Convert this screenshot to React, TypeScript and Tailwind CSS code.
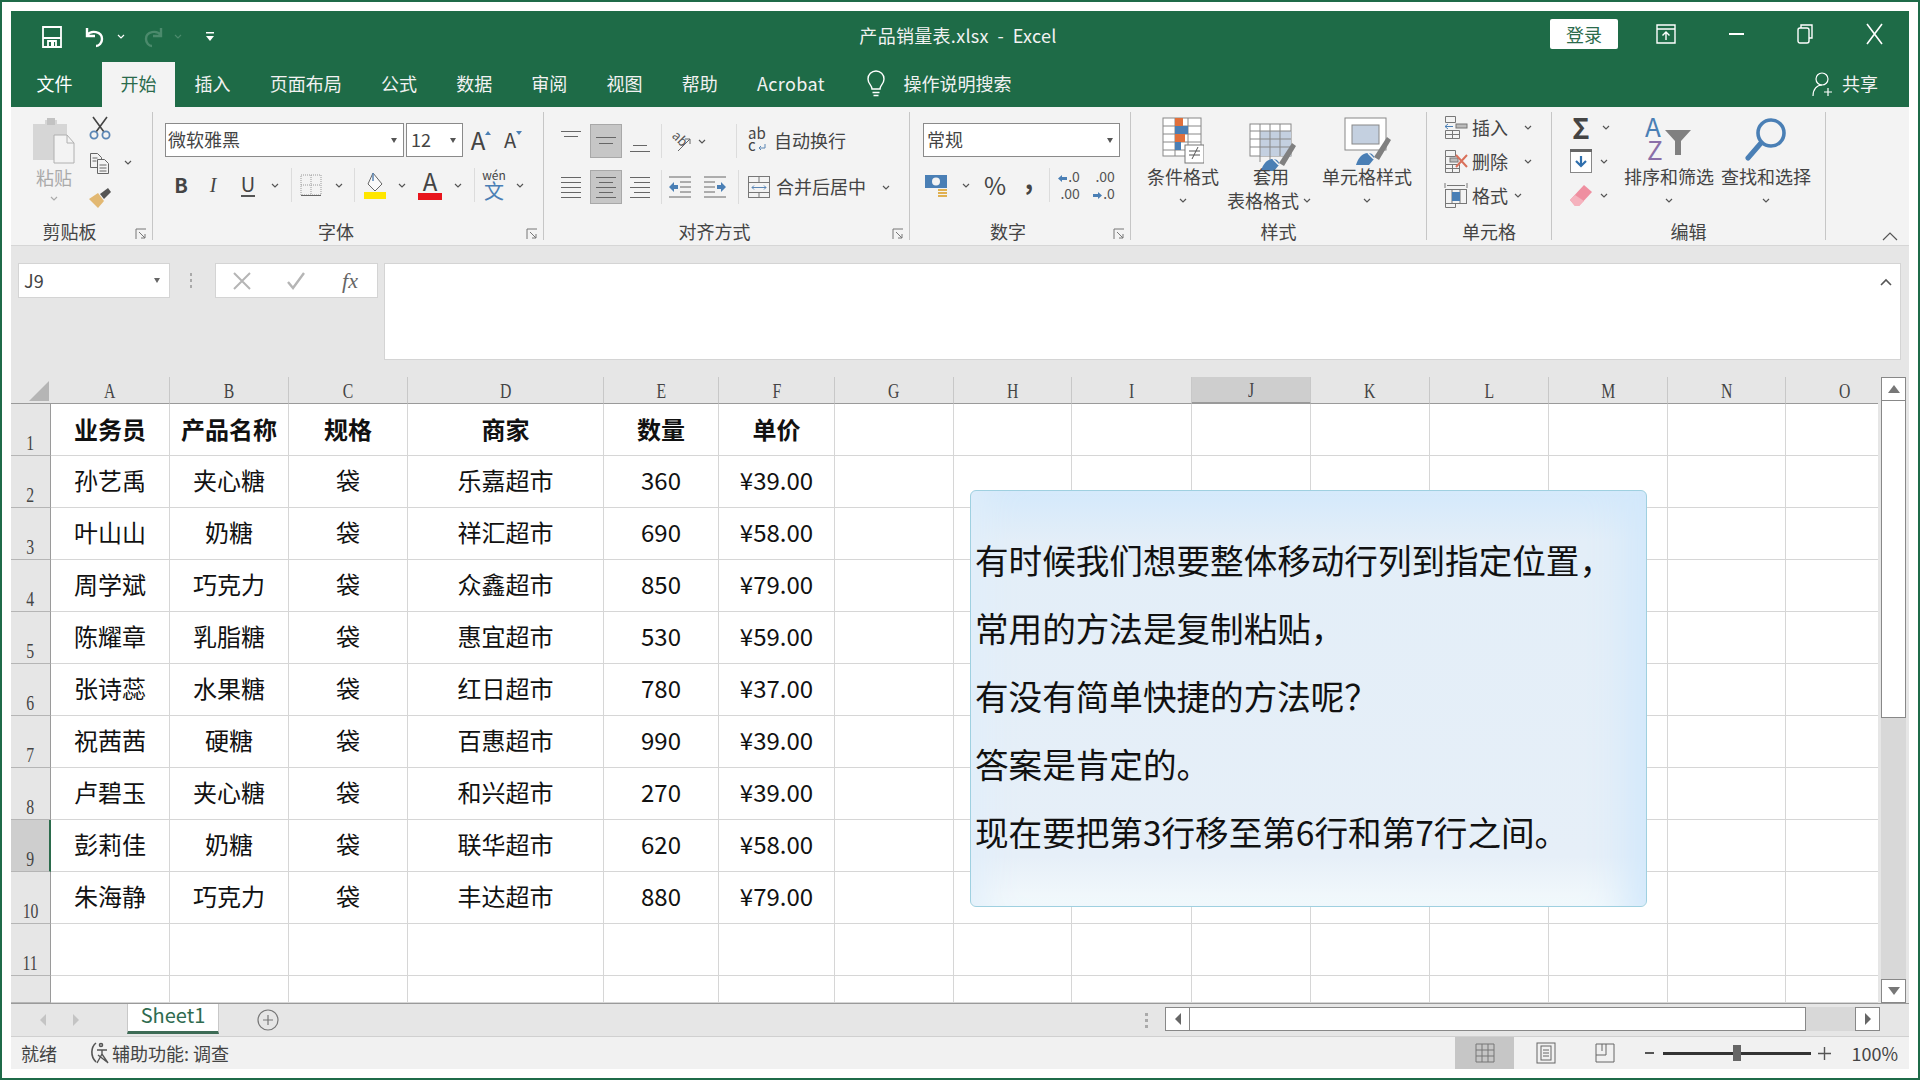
import type { ReactNode } from "react";
import clsx from "clsx";

const widths = ["A", "B", "C", "D", "E", "F", "G", "H", "I", "J", "K", "L", "M", "N", "O"];

const rows = [
  ["业务员", "产品名称", "规格", "商家", "数量", "单价"],
  ["孙艺禹", "夹心糖", "袋", "乐嘉超市", "360", "¥39.00"],
  ["叶山山", "奶糖", "袋", "祥汇超市", "690", "¥58.00"],
  ["周学斌", "巧克力", "袋", "众鑫超市", "850", "¥79.00"],
  ["陈耀章", "乳脂糖", "袋", "惠宜超市", "530", "¥59.00"],
  ["张诗蕊", "水果糖", "袋", "红日超市", "780", "¥37.00"],
  ["祝茜茜", "硬糖", "袋", "百惠超市", "990", "¥39.00"],
  ["卢碧玉", "夹心糖", "袋", "和兴超市", "270", "¥39.00"],
  ["彭莉佳", "奶糖", "袋", "联华超市", "620", "¥58.00"],
  ["朱海静", "巧克力", "袋", "丰达超市", "880", "¥79.00"],
];

const tabs = ["插入", "页面布局", "公式", "数据", "审阅", "视图", "帮助"];

const note = [
  "有时候我们想要整体移动行列到指定位置，",
  "常用的方法是复制粘贴，",
  "有没有简单快捷的方法呢？",
  "答案是肯定的。",
  "现在要把第3行移至第6行和第7行之间。",
];

function Slot({ className, children }: { className?: string; children?: ReactNode }) {
  return <div className={clsx("flex h-full shrink-0 items-center justify-center", className)}>{children}</div>;
}

function Chev({ className, color = "#555" }: { className?: string; color?: string }) {
  return (
    <Slot className={clsx("w-[16px]", className)}>
      <svg width="8" height="5" viewBox="0 0 8 5" fill="none" stroke={color} strokeWidth="1.2">
        <path d="M1 1l3 3 3-3" />
      </svg>
    </Slot>
  );
}

function Sep({ className }: { className?: string }) {
  return <div className={clsx("h-[34px] w-px shrink-0 bg-[#dcdcdc]", className)} />;
}

function Launcher() {
  return (
    <svg className="absolute right-[5px] top-[9px]" width="12" height="12" viewBox="0 0 12 12" fill="none" stroke="#777">
      <path d="M1 11V1h10M4 4l6 6M10 6v4H6" />
    </svg>
  );
}

function Group({ className, label, launcher, children }: { className: string; label: string; launcher?: boolean; children: ReactNode }) {
  return (
    <div className={clsx("flex h-[128px] shrink-0 flex-col border-r border-[#c6c6c6]", className)}>
      <div className="h-[107px]">{children}</div>
      <div className={clsx("relative -mb-[3px] h-[24px] text-center text-[18px] leading-[24px] text-[#444]", launcher && "pr-[24px]")}>
        {label}
        {launcher && <Launcher />}
      </div>
    </div>
  );
}

function Lines({ lines, w = 24, h = 24 }: { lines: number[][]; w?: number; h?: number }) {
  return (
    <svg width={w} height={h} viewBox={`0 0 ${w} ${h}`} stroke="#666" strokeWidth="1">
      {lines.map(([x1, x2, y]) => (
        <line key={`${x1}-${y}`} x1={x1} x2={x2} y1={y + 0.5} y2={y + 0.5} />
      ))}
    </svg>
  );
}

function Paste() {
  return (
    <svg width="44" height="46" viewBox="0 0 44 46">
      <path d="M1 6h12V2h12v4h10v36H1z" fill="#d6d6d6" />
      <rect x="15" y="0" width="8" height="7" fill="#c2c2c2" />
      <path d="M22 17h13l7 8v20H22z" fill="#f3f3f3" stroke="#b0b0b0" />
      <path d="M35 17v8h7" fill="none" stroke="#b0b0b0" />
    </svg>
  );
}

function Scissors() {
  return (
    <svg width="22" height="24" viewBox="0 0 22 24" fill="none">
      <path d="M4 1l11 15M18 1L7 16" stroke="#444" strokeWidth="1.6" />
      <circle cx="5" cy="19" r="3.6" stroke="#5b86b5" strokeWidth="1.8" />
      <circle cx="17" cy="19" r="3.6" stroke="#5b86b5" strokeWidth="1.8" />
    </svg>
  );
}

function Copy() {
  return (
    <svg width="22" height="22" viewBox="0 0 22 22" fill="#f3f3f3" stroke="#666">
      <path d="M1.5 1.5h7l4 4v10h-11z" />
      <path d="M8.5 7.5h7l4 4v10h-11z" />
      <path d="M3.5 6h5M3.5 9h4M10.5 13h7M10.5 16h7M10.5 19h7" fill="none" />
    </svg>
  );
}

function Brush() {
  return (
    <svg width="24" height="22" viewBox="0 0 24 22">
      <path d="M1 12l9-6 6 8-6 7z" fill="#e2b872" />
      <path d="M12 7l8-6 3 4-7 7z" fill="#555" />
    </svg>
  );
}

function BorderIcon() {
  return (
    <svg width="22" height="22" viewBox="0 0 22 22" fill="none" stroke="#999" strokeDasharray="1 1">
      <path d="M1 1h20v20H1zM11 1v20M1 11h20" />
      <path d="M1 21.5h20" stroke="#666" strokeDasharray="none" />
    </svg>
  );
}

function Fill() {
  return (
    <svg width="24" height="28" viewBox="0 0 24 28">
      <path d="M10 2l9 11-7 7-7-7z" fill="#fafafa" stroke="#666" />
      <path d="M10 2v8" stroke="#5b86b5" strokeWidth="1.5" />
      <rect x="1" y="21" width="22" height="7" fill="#ffe600" />
    </svg>
  );
}

function Wrap() {
  return (
    <svg width="26" height="30" viewBox="0 0 26 30" fontFamily="Noto Sans CJK SC, sans-serif" fontSize="15">
      <text x="4" y="13" fill="#444">ab</text>
      <text x="4" y="25" fill="#444">c</text>
      <path d="M21 18v4h-6M17 20l-2 2 2 2" fill="none" stroke="#5b86b5" />
    </svg>
  );
}

function Merge() {
  return (
    <svg width="24" height="24" viewBox="0 0 24 24" fill="none" stroke="#777">
      <rect x="1.5" y="1.5" width="21" height="21" />
      <path d="M1.5 7.5h21M1.5 17.5h21M12 1.5v6M12 17.5v5" />
      <path d="M5 12.5h14M7 10.5l-2 2 2 2M17 10.5l2 2-2 2" stroke="#5b86b5" />
    </svg>
  );
}

function Orient() {
  return (
    <svg width="24" height="24" viewBox="0 0 24 24" fontFamily="Noto Sans CJK SC, sans-serif" fontSize="13">
      <text x="3" y="12" fill="#555" transform="rotate(45 8 9)">ab</text>
      <path d="M9 22L21 10M16 10h5v5" fill="none" stroke="#666" />
    </svg>
  );
}

function Indent({ flip }: { flip?: boolean }) {
  return (
    <svg width="24" height="24" viewBox="0 0 24 24" className={flip ? "-scale-x-100" : ""}>
      <path d="M1 2h22M12 7h11M12 12h11M12 17h11M1 22h22" stroke="#666" fill="none" />
      <path d="M1 12l5-5v3h4v4H6v3z" fill="#4a7fb5" />
    </svg>
  );
}

function Currency() {
  return (
    <svg width="26" height="26" viewBox="0 0 26 26">
      <rect x="1" y="3" width="22" height="13" fill="#4a7fb5" />
      <circle cx="12" cy="9.5" r="4" fill="#f3f3f3" />
      <path d="M14 18h9M14 21h9M14 24h9" stroke="#e0b050" strokeWidth="2" />
    </svg>
  );
}

function Decimal({ children }: { children: ReactNode }) {
  return <div className="flex flex-col items-end text-[14px] leading-[17px] text-[#555]">{children}</div>;
}

function ArrowL({ flip }: { flip?: boolean }) {
  return (
    <svg width="9" height="9" viewBox="0 0 9 9" className={clsx("mr-[1px] inline", flip && "-scale-x-100")}>
      <path d="M0 4.5L4 1v2h5v3H4v2z" fill="#4a7fb5" />
    </svg>
  );
}

function CondFormat() {
  return (
    <svg width="42" height="48" viewBox="0 0 42 48">
      <g fill="none" stroke="#888">
        <rect x="1" y="1" width="38" height="38" fill="#fff" />
        <path d="M1 9h38M1 17h38M1 25h38M1 33h38M13 1v38M26 1v38" />
      </g>
      <rect x="13" y="1" width="8" height="8" fill="#e0703c" />
      <rect x="13" y="9" width="13" height="8" fill="#4a7fb5" />
      <rect x="13" y="17" width="10" height="8" fill="#e0703c" />
      <rect x="13" y="25" width="6" height="8" fill="#4a7fb5" />
      <rect x="23" y="28" width="19" height="18" fill="#fff" stroke="#777" />
      <path d="M27 38h11M27 34h11M36 30l-6 12" fill="none" stroke="#555" />
    </svg>
  );
}

function BrushTip() {
  return (
    <g>
      <path d="M30 40l13-20 4 3-12 20z" fill="#808080" />
      <path d="M12 48c2-7 6-12 12-12 4 0 7 3 6 6l-5 6z" fill="#4a7fb5" />
      <path d="M24 36l6 6" stroke="#f3f3f3" strokeWidth="1.5" />
    </g>
  );
}

function TableFormat() {
  return (
    <svg className="ml-[4px] mt-[6px]" width="48" height="48" viewBox="0 0 48 48">
      <rect x="1" y="1" width="41" height="32" fill="#fff" stroke="#888" />
      <rect x="11" y="8" width="31" height="25" fill="#c4d0e0" />
      <path d="M1 8h41M1 16h41M1 24h41M11 1v38M21 1v38M31 1v32" stroke="#888" fill="none" />
      <BrushTip />
    </svg>
  );
}

function CellStyle() {
  return (
    <svg className="ml-[2px]" width="48" height="48" viewBox="0 0 48 48">
      <rect x="1" y="1" width="41" height="32" fill="#fff" stroke="#888" />
      <rect x="8" y="8" width="27" height="19" fill="#c4d0e0" stroke="#888" />
      <BrushTip />
    </svg>
  );
}

function CellInsert() {
  return (
    <svg width="24" height="24" viewBox="0 0 24 24" fill="none" stroke="#777">
      <path d="M1.5 1.5h10v6h-10zM1.5 15.5h14v8h-14zM8.5 15.5v8M1.5 19.5h14" />
      <rect x="12" y="9" width="11" height="4" fill="#bbb" />
      <path d="M1 11.5h8M4 9l-3 2.5L4 14" stroke="#4a7fb5" />
    </svg>
  );
}

function CellDelete() {
  return (
    <svg width="24" height="24" viewBox="0 0 24 24" fill="none" stroke="#777">
      <path d="M1.5 1.5h10v6h-10zM1.5 15.5h14v8h-14zM8.5 15.5v8M1.5 19.5h14M1.5 7.5v8" />
      <rect x="6" y="9" width="8" height="4" fill="#bbb" />
      <path d="M12 6l11 12M23 6L12 18" stroke="#d9705a" strokeWidth="2" />
    </svg>
  );
}

function CellFormat() {
  return (
    <svg width="24" height="26" viewBox="0 0 24 26" fill="none" stroke="#777">
      <path d="M1 1v5M23 1v5M3 3.5h18" />
      <rect x="1.5" y="7.5" width="21" height="14" />
      <path d="M8 7.5v14M16 7.5v14M1.5 21.5v4h10v-4" />
      <rect x="8" y="10" width="8" height="9" fill="#4a7fb5" stroke="none" />
    </svg>
  );
}

function FillDown() {
  return (
    <svg width="22" height="24" viewBox="0 0 22 24">
      <rect x="0.5" y="0.5" width="21" height="23" fill="#fff" stroke="#888" />
      <rect x="0" y="0" width="22" height="3" fill="#666" />
      <path d="M11 7v10M6 12l5 5 5-5" fill="none" stroke="#2f6fad" strokeWidth="2.2" />
    </svg>
  );
}

function Eraser() {
  return (
    <svg width="24" height="24" viewBox="0 0 24 24">
      <path d="M1 17L15 2l8 7-13 14H6z" fill="#ef8fa0" />
      <path d="M1 17l5-5 9 6-5 5H6z" fill="#f5b2bd" />
    </svg>
  );
}

function SortFilter() {
  return (
    <svg width="48" height="46" viewBox="0 0 48 46" fontFamily="Noto Sans CJK SC, sans-serif" fontSize="26">
      <text x="0" y="20" fill="#4a7fb5">A</text>
      <text x="2" y="43" fill="#8a6fa8">Z</text>
      <path d="M20 13h26l-10 11v14h-6V24z" fill="#808080" />
    </svg>
  );
}

function Magnifier() {
  return (
    <svg width="42" height="44" viewBox="0 0 42 44" fill="none">
      <circle cx="26" cy="16" r="13" stroke="#4a7fb5" strokeWidth="3.6" />
      <path d="M16 26L3 41" stroke="#4a7fb5" strokeWidth="5" strokeLinecap="round" />
    </svg>
  );
}

function LargeButton({ icon, first, second, className }: { icon: ReactNode; first: string; second?: ReactNode; className: string }) {
  return (
    <div className={clsx("flex shrink-0 flex-col items-center whitespace-nowrap", className)}>
      <div className="flex h-[52px] items-start pt-[5px]">{icon}</div>
      <div className="h-[24px] text-[18px] leading-[24px]">{first}</div>
      <div className="flex h-[24px] items-center text-[18px] leading-[24px]">{second ?? <Chev />}</div>
    </div>
  );
}

function TitleBar() {
  return (
    <div className="grid h-[51px] grid-cols-[1fr_auto_1fr] items-center text-white">
      <div className="flex h-full items-center pl-[27px]">
        <Slot className="w-[28px]">
          <svg width="20" height="22" viewBox="0 0 20 22" fill="none" stroke="#fff" strokeWidth="1.8">
            <path d="M1 1h18v20H1zM1 12h18M6 21v-6h8v6" />
            <rect x="9" y="16" width="3" height="5" fill="#fff" stroke="none" />
          </svg>
        </Slot>
        <Slot className="ml-[14px] w-[30px]">
          <svg width="22" height="22" viewBox="0 0 22 22" fill="none" stroke="#fff" strokeWidth="2.4">
            <path d="M3 2v8h8M3 9c4-5 15-4 15 4 0 4-3 7-6 7" />
          </svg>
        </Slot>
        <Chev className="ml-[3px]" color="#fff" />
        <Slot className="ml-[9px] w-[30px]">
          <svg width="22" height="22" viewBox="0 0 22 22" fill="none" stroke="#4b8a6c" strokeWidth="2.4">
            <path d="M19 2v8h-8M19 9c-4-5-15-4-15 4 0 4 3 7 6 7" />
          </svg>
        </Slot>
        <Chev className="ml-[2px]" color="#4b8a6c" />
        <Slot className="ml-[17px] w-[14px]">
          <svg width="10" height="10" viewBox="0 0 10 10" fill="#fff">
            <path d="M1 0h8v1.4H1zM1 4h8L5 9z" />
          </svg>
        </Slot>
      </div>
      <div className="pb-[3px] pr-[4px] text-[18px] leading-[24px] tracking-[0.3px] text-[#f2f2f2]">产品销量表.xlsx&nbsp; -&nbsp; Excel</div>
      <div className="flex h-full items-center justify-end pb-[5px] pr-[20px]">
        <div className="flex h-[30px] w-[68px] items-center justify-center rounded-[2px] bg-white text-[18px] text-[#2b6b4c]">登录</div>
        <Slot className="ml-[33px] w-[30px]">
          <svg width="20" height="20" viewBox="0 0 20 20" fill="none" stroke="#fff" strokeWidth="1.4">
            <path d="M1 1h18v18H1zM1 5h18M10 16V8M6.5 11.5L10 8l3.5 3.5" />
          </svg>
        </Slot>
        <Slot className="ml-[40px] w-[30px]">
          <div className="h-[2px] w-[15px] bg-white" />
        </Slot>
        <Slot className="ml-[39px] w-[30px]">
          <svg width="16" height="20" viewBox="0 0 16 20" fill="none" stroke="#fff" strokeWidth="1.4">
            <path d="M4 4V1h11v13h-3" />
            <rect x="1" y="4" width="11" height="15" rx="2" />
          </svg>
        </Slot>
        <Slot className="ml-[39px] w-[30px]">
          <svg width="17" height="22" viewBox="0 0 17 22" stroke="#fff" strokeWidth="1.6">
            <path d="M1 1l15 20M16 1L1 21" />
          </svg>
        </Slot>
      </div>
    </div>
  );
}

function TabRow() {
  return (
    <div className="flex h-[45px] items-stretch text-[18px] text-white">
      <div className="ml-[6px] flex w-[75px] items-center justify-center pb-[2px]">文件</div>
      <div className="ml-[10px] flex w-[73px] items-center justify-center bg-[#f3f3f3] pb-[2px] text-[#2b6b4c]">开始</div>
      {tabs.map((t) => (
        <div key={t} className="flex items-center px-[19.6px] pb-[2px] text-[#f2f2f2]">
          {t}
        </div>
      ))}
      <div className="flex items-center px-[19.6px] pb-[2px] tracking-[0.4px] text-[#f2f2f2]">Acrobat</div>
      <div className="ml-[21px] flex items-center">
        <svg width="20" height="30" viewBox="0 0 20 30" fill="none" stroke="#fff" strokeWidth="1.4">
          <path d="M6 19c0-4-4-5-4-10a8 8 0 0116 0c0 5-4 6-4 10zM6.5 22.5h7M7.5 25.5h5" />
        </svg>
      </div>
      <div className="ml-[18px] flex items-center pb-[2px] text-[#f2f2f2]">操作说明搜索</div>
      <div className="ml-auto mr-[31px] flex items-center gap-[8px] pb-[2px] text-[#f2f2f2]">
        <svg width="22" height="26" viewBox="0 0 22 26" fill="none" stroke="#fff" strokeWidth="1.2">
          <circle cx="10" cy="8" r="6" />
          <path d="M1 25c0-7 4-11 9-11M16 17v8M12 21h8" />
        </svg>
        共享
      </div>
    </div>
  );
}

function Ribbon() {
  return (
    <div className="flex h-[139px] border-b border-[#d6d6d6] bg-[#f3f3f3] pt-[5px] text-[#444]">
      <Group className="w-[142px]" label="剪贴板" launcher>
        <div className="flex">
          <div className="ml-[11px] flex w-[64px] flex-col items-center pt-[6px]">
            <div className="h-[47px]">
              <Paste />
            </div>
            <div className="text-[18px] leading-[24px] text-[#aaa]">粘贴</div>
            <div className="h-[18px]">
              <Chev color="#aaa" />
            </div>
          </div>
          <div className="-mt-[2px]">
            <div className="flex h-[35px]">
              <Slot className="w-[28px]">
                <Scissors />
              </Slot>
            </div>
            <div className="flex h-[35px]">
              <Slot className="w-[28px]">
                <Copy />
              </Slot>
              <Chev className="ml-[6px]" />
            </div>
            <div className="flex h-[35px]">
              <Slot className="w-[28px]">
                <Brush />
              </Slot>
            </div>
          </div>
        </div>
      </Group>

      <Group className="w-[391px]" label="字体" launcher>
        <div className="mt-[11px] flex h-[34px] items-stretch pl-[12px]">
          <div className="flex w-[239px] items-center justify-between border border-[#8a8a8a] bg-white pl-[2px] pr-[6px] text-[18px]">
            <span className="pb-[2px]">微软雅黑</span>
            <span className="border-x-[3.5px] border-t-[5px] border-x-transparent border-t-[#555]" />
          </div>
          <div className="ml-[2px] flex w-[57px] items-center justify-between border border-[#8a8a8a] bg-white pl-[4px] pr-[6px] text-[18px]">
            <span className="pb-[2px]">12</span>
            <span className="border-x-[3.5px] border-t-[5px] border-x-transparent border-t-[#555]" />
          </div>
          <Slot className="ml-[2px] w-[32px]">
            <span className="text-[24px] leading-none">A</span>
            <span className="-mt-[14px] border-x-[3px] border-b-[4px] border-x-transparent border-b-[#4a7fb5]" />
          </Slot>
          <Slot className="w-[32px]">
            <span className="text-[20px] leading-none">A</span>
            <span className="-mt-[14px] border-x-[3px] border-t-[4px] border-x-transparent border-t-[#4a7fb5]" />
          </Slot>
        </div>
        <div className="mt-[10px] flex h-[36px] items-center pl-[12px]">
          <Slot className="w-[32px] text-[20px] font-bold">B</Slot>
          <Slot className="w-[32px] font-['Liberation_Serif',serif] text-[20px] italic">I</Slot>
          <Slot className="w-[38px]">
            <span className="border-b-[2px] border-[#555] text-[20px] leading-[22px]">U</span>
          </Slot>
          <Chev />
          <Sep className="ml-[8px]" />
          <Slot className="ml-[2px] w-[34px]">
            <BorderIcon />
          </Slot>
          <Chev className="ml-[3px]" />
          <Sep className="ml-[7px]" />
          <Slot className="ml-[3px] w-[34px]">
            <Fill />
          </Slot>
          <Chev className="ml-[2px]" />
          <Slot className="ml-[4px] w-[32px] flex-col">
            <span className="text-[24px] leading-[22px]">A</span>
            <span className="mt-[1px] h-[7px] w-[24px] bg-[#e8141c]" />
          </Slot>
          <Chev className="ml-[4px]" />
          <Sep className="ml-[8px]" />
          <Slot className="ml-[4px] w-[30px] flex-col text-[#4a7fb5]">
            <span className="text-[12px] leading-[12px] text-[#444]">wén</span>
            <span className="text-[20px] leading-[20px]">文</span>
          </Slot>
          <Chev className="ml-[3px]" />
        </div>
      </Group>

      <Group className="w-[366px]" label="对齐方式" launcher>
        <div className="mt-[12px] flex h-[34px] items-center pl-[10px] text-[18px]">
          <Slot className="w-[34px]">
            <Lines lines={[[2, 22, 2], [5, 19, 7]]} />
          </Slot>
          <Slot className="ml-[2px] w-[32px] border border-[#a8a8a8] bg-[#c6c6c6]">
            <Lines lines={[[2, 22, 8], [5, 19, 14]]} />
          </Slot>
          <Slot className="ml-[1px] w-[34px]">
            <Lines lines={[[5, 19, 16], [2, 22, 22]]} />
          </Slot>
          <Sep className="ml-[4px]" />
          <Slot className="ml-[6px] w-[26px]">
            <Orient />
          </Slot>
          <Chev />
          <Sep className="ml-[26px]" />
          <Slot className="ml-[5px] w-[30px]">
            <Wrap />
          </Slot>
          <span className="ml-[2px] pb-[2px] leading-[24px]">自动换行</span>
        </div>
        <div className="mt-[12px] flex h-[34px] items-center pl-[10px] text-[18px]">
          <Slot className="w-[34px]">
            <Lines lines={[[2, 22, 2], [2, 22, 7], [2, 22, 12], [2, 22, 17], [2, 22, 22]]} />
          </Slot>
          <Slot className="ml-[2px] w-[32px] border border-[#a8a8a8] bg-[#c6c6c6]">
            <Lines lines={[[2, 22, 2], [5, 19, 7], [2, 22, 12], [5, 19, 17], [2, 22, 22]]} />
          </Slot>
          <Slot className="ml-[1px] w-[34px]">
            <Lines lines={[[2, 22, 2], [6, 22, 7], [2, 22, 12], [6, 22, 17], [2, 22, 22]]} />
          </Slot>
          <Sep className="ml-[4px]" />
          <Slot className="ml-[2px] w-[32px]">
            <Indent />
          </Slot>
          <Slot className="ml-[3px] w-[32px]">
            <Indent flip />
          </Slot>
          <Sep className="ml-[7px]" />
          <Slot className="ml-[5px] w-[30px]">
            <Merge />
          </Slot>
          <span className="ml-[2px] pb-[2px] leading-[24px]">合并后居中</span>
          <Chev className="ml-[12px]" />
        </div>
      </Group>

      <Group className="w-[221px]" label="数字" launcher>
        <div className="mt-[11px] flex h-[34px] pl-[13px]">
          <div className="flex w-[197px] items-center justify-between border border-[#8a8a8a] bg-white pl-[3px] pr-[6px] text-[18px]">
            <span className="pb-[2px]">常规</span>
            <span className="border-x-[3.5px] border-t-[5px] border-x-transparent border-t-[#555]" />
          </div>
        </div>
        <div className="mt-[10px] flex h-[36px] items-center pl-[11px]">
          <Slot className="w-[32px]">
            <Currency />
          </Slot>
          <Chev className="ml-[5px]" />
          <Slot className="ml-[6px] w-[30px] text-[24px]">%</Slot>
          <Slot className="ml-[7px] w-[24px] pb-[16px] text-[26px] font-bold">,</Slot>
          <Sep className="ml-[8px]" />
          <Slot className="ml-[3px] w-[32px]">
            <Decimal>
              <span>
                <ArrowL />.0
              </span>
              <span>.00</span>
            </Decimal>
          </Slot>
          <Slot className="ml-[3px] w-[32px]">
            <Decimal>
              <span>.00</span>
              <span>
                <ArrowL flip />.0
              </span>
            </Decimal>
          </Slot>
        </div>
      </Group>

      <Group className="w-[296px]" label="样式">
        <div className="flex pl-[7px]">
          <LargeButton className="w-[90px]" icon={<CondFormat />} first="条件格式" />
          <LargeButton
            className="w-[86px]"
            icon={<TableFormat />}
            first="套用"
            second={
              <>
                表格格式
                <Chev />
              </>
            }
          />
          <LargeButton className="w-[106px]" icon={<CellStyle />} first="单元格样式" />
        </div>
      </Group>

      <Group className="w-[125px]" label="单元格">
        <div className="-mt-[2px] pl-[14px] text-[18px]">
          <div className="flex h-[34px] items-center">
            <Slot className="w-[30px]">
              <CellInsert />
            </Slot>
            <span className="ml-[1px]">插入</span>
            <Chev className="ml-[12px]" />
          </div>
          <div className="flex h-[34px] items-center">
            <Slot className="w-[30px]">
              <CellDelete />
            </Slot>
            <span className="ml-[1px]">删除</span>
            <Chev className="ml-[12px]" />
          </div>
          <div className="flex h-[34px] items-center">
            <Slot className="w-[30px]">
              <CellFormat />
            </Slot>
            <span className="ml-[1px]">格式</span>
            <Chev className="ml-[2px]" />
          </div>
        </div>
      </Group>

      <Group className="w-[274px]" label="编辑">
        <div className="flex pl-[14px]">
          <div className="-mt-[2px] w-[48px]">
            <div className="flex h-[34px] items-center">
              <Slot className="w-[30px] text-[28px] font-bold leading-none">Σ</Slot>
              <Chev className="ml-[2px]" />
            </div>
            <div className="flex h-[34px] items-center">
              <Slot className="w-[30px]">
                <FillDown />
              </Slot>
              <Chev />
            </div>
            <div className="flex h-[34px] items-center">
              <Slot className="w-[30px]">
                <Eraser />
              </Slot>
              <Chev />
            </div>
          </div>
          <LargeButton className="ml-[10px] w-[90px]" icon={<SortFilter />} first="排序和筛选" />
          <LargeButton className="ml-[7px] w-[90px]" icon={<Magnifier />} first="查找和选择" />
        </div>
      </Group>

      <div className="flex flex-1 items-end justify-end pb-[4px] pr-[11px]">
        <svg width="16" height="9" viewBox="0 0 16 9" fill="none" stroke="#555" strokeWidth="1.2">
          <path d="M1 8l7-7 7 7" />
        </svg>
      </div>
    </div>
  );
}

function FormulaBar() {
  return (
    <div className="flex h-[131px] bg-[#e6e6e6] pt-[17px] text-[18px]">
      <div className="ml-[7px] flex h-[35px] w-[152px] items-center justify-between border border-[#d4d4d4] bg-white pl-[5px] pr-[9px] text-[#444]">
        J9
        <span className="border-x-[3.5px] border-t-[5px] border-x-transparent border-t-[#666]" />
      </div>
      <div className="ml-[17px] flex h-[35px] w-[8px] flex-col items-center justify-center gap-[3px]">
        <span className="h-[3px] w-[2px] bg-[#aaa]" />
        <span className="h-[3px] w-[2px] bg-[#aaa]" />
        <span className="h-[3px] w-[2px] bg-[#aaa]" />
      </div>
      <div className="ml-[20px] flex h-[35px] w-[163px] items-center border border-[#d4d4d4] bg-white">
        <Slot className="ml-[12px] w-[28px]">
          <svg width="20" height="18" viewBox="0 0 20 18" stroke="#b5b5b5" strokeWidth="2">
            <path d="M2 1l16 16M18 1L2 17" />
          </svg>
        </Slot>
        <Slot className="ml-[26px] w-[28px]">
          <svg width="20" height="18" viewBox="0 0 20 18" fill="none" stroke="#b5b5b5" strokeWidth="2.4">
            <path d="M2 10l5 6L18 1" />
          </svg>
        </Slot>
        <Slot className="ml-[26px] w-[28px] font-['Liberation_Serif',serif] text-[22px] italic text-[#666]">fx</Slot>
      </div>
      <div className="ml-[6px] mr-[8px] flex h-[97px] flex-1 justify-end border border-[#d4d4d4] bg-white pr-[8px] pt-[14px]">
        <svg width="12" height="8" viewBox="0 0 12 8" fill="none" stroke="#555" strokeWidth="1.6">
          <path d="M1 7l5-5 5 5" />
        </svg>
      </div>
    </div>
  );
}

function Sheet() {
  return (
    <div className="relative w-[1867px] overflow-hidden">
      <div className="grid grid-cols-[40px_119px_119px_119px_196px_115px_116px_119px_118px_120px_119px_119px_119px_119px_118px_119px] grid-rows-[27px_repeat(11,52px)_27px] bg-white">
        <div className="flex items-end justify-end border-b border-[#9a9a9a] bg-[#e6e6e6] pb-[2px] pr-[2px]">
          <span className="border-b-[20px] border-l-[20px] border-b-[#b5b5b5] border-l-transparent" />
        </div>
        {widths.map((c) => (
          <div
            key={c}
            className={clsx(
              "flex items-center justify-center border-r border-[#c8c8c8] border-b-[#9a9a9a] pt-[2px] font-['Liberation_Serif',serif] text-[21px] leading-none text-[#444]",
              c === "J" ? "border-b-2 border-b-[#2b6b4c] bg-[#cecece]" : "border-b bg-[#e6e6e6]",
            )}
          >
            <span className="inline-block scale-x-75">{c}</span>
          </div>
        ))}
        {Array.from({ length: 12 }, (_, r) => (
          <div key={r} className="contents">
            <div
              className={clsx(
                "flex items-end justify-center border-b border-[#b5b5b5] pb-[1px] font-['Liberation_Serif',serif] text-[21px] leading-[22px] text-[#444]",
                r === 8 ? "border-r-2 border-r-[#2b6b4c] bg-[#cecece]" : "border-r border-r-[#9a9a9a] bg-[#e6e6e6]",
              )}
            >
              {r < 11 && <span className="inline-block scale-x-75">{r + 1}</span>}
            </div>
            {widths.map((c, i) => (
              <div
                key={c}
                className={clsx(
                  "flex items-center justify-center border-b border-r border-[#d6d6d6] text-[24px] text-[#111]",
                  r === 0 ? "pb-[2px] font-bold" : "pb-[4px]",
                )}
              >
                {rows[r]?.[i]}
              </div>
            ))}
          </div>
        ))}
      </div>
      {/* text box floats over the cells */}
      <div className="absolute left-[959px] top-[113px] flex h-[417px] w-[677px] flex-col rounded-[6px] border border-[#9fd0e0] bg-[linear-gradient(180deg,#d4e9fb_0%,#e3eef8_12%,#e6eff8_88%,#f3f9fc_100%)] pl-[4px] pt-[35px] text-[33.6px] leading-[68px] text-[#111] shadow-[inset_40px_0_40px_-30px_#e0eefa,inset_-50px_0_40px_-30px_#d2e8fb]">
        {note.map((t) => (
          <div key={t} className="whitespace-nowrap">
            {t}
          </div>
        ))}
      </div>
    </div>
  );
}

function VScroll() {
  return (
    <div className="flex w-[31px] flex-col bg-[#e6e6e6] px-[3px]">
      <div className="flex h-[24px] items-center justify-center border border-[#888] bg-white">
        <span className="border-x-[6px] border-b-[8px] border-x-transparent border-b-[#777]" />
      </div>
      <div className="h-[317px] border border-t-0 border-[#888] bg-white" />
      <div className="flex-1 bg-[#d8d8d8]" />
      <div className="flex h-[24px] items-center justify-center border border-[#888] bg-white">
        <span className="border-x-[6px] border-t-[8px] border-x-transparent border-t-[#777]" />
      </div>
    </div>
  );
}

function SheetTabs() {
  return (
    <div className="flex h-[33px] border-t border-[#9a9a9a] bg-[#e6e6e6]">
      <Slot className="ml-[22px] w-[20px]">
        <span className="border-y-[6px] border-r-[6px] border-y-transparent border-r-[#c4c4c4]" />
      </Slot>
      <Slot className="ml-[13px] w-[20px]">
        <span className="border-y-[6px] border-l-[6px] border-y-transparent border-l-[#c4c4c4]" />
      </Slot>
      <div className="ml-[41px] flex h-[30px] w-[92px] items-center justify-center border-x border-b-[3px] border-x-[#c8c8c8] border-b-[#3d6b55] bg-white pb-[5px] text-[20px] text-[#2f6b4f]">
        Sheet1
      </div>
      <Slot className="ml-[38px] w-[22px]">
        <svg width="22" height="22" viewBox="0 0 22 22" fill="none" stroke="#777" strokeWidth="1.2">
          <circle cx="11" cy="11" r="10" />
          <path d="M11 6v10M6 11h10" />
        </svg>
      </Slot>
      <div className="ml-[864px] flex w-[6px] flex-col items-center justify-center gap-[3px]">
        <span className="h-[3px] w-[3px] bg-[#aaa]" />
        <span className="h-[3px] w-[3px] bg-[#aaa]" />
        <span className="h-[3px] w-[3px] bg-[#aaa]" />
      </div>
      <div className="ml-[16px] mt-[3px] flex h-[24px] w-[715px]">
        <div className="flex w-[25px] items-center justify-center border border-[#888] bg-white">
          <span className="border-y-[6px] border-r-[6px] border-y-transparent border-r-[#666]" />
        </div>
        <div className="w-[616px] border border-l-0 border-[#888] bg-white" />
        <div className="flex-1 bg-[#d8d8d8]" />
        <div className="flex w-[25px] items-center justify-center border border-[#888] bg-white">
          <span className="border-y-[6px] border-l-[6px] border-y-transparent border-l-[#666]" />
        </div>
      </div>
    </div>
  );
}

function StatusBar() {
  return (
    <div className="flex h-[33px] items-center border-t border-[#d0d0d0] bg-[#f1f1f1] text-[18px] text-[#444]">
      <span className="ml-[10px]">就绪</span>
      <svg className="ml-[30px]" width="24" height="24" viewBox="0 0 24 24" fill="none" stroke="#555" strokeWidth="1.6">
        <path d="M9 2C4 6 3 15 9 21" />
        <circle cx="14" cy="4" r="1.5" />
        <path d="M10 9h10M15 9v4M10 22l5-9 6 9M11 14l9 7" strokeWidth="1.4" />
      </svg>
      <span className="ml-[1px]">辅助功能: 调查</span>
      <div className="ml-auto flex h-full items-center">
        <Slot className="w-[59px] bg-[#c6c6c6]">
          <svg width="20" height="20" viewBox="0 0 20 20" fill="none" stroke="#777">
            <path d="M1 1h18v18H1zM7 1v18M13 1v18M1 7h18M1 13h18" />
          </svg>
        </Slot>
        <Slot className="ml-[17px] w-[30px]">
          <svg width="20" height="22" viewBox="0 0 20 22" fill="none" stroke="#666">
            <rect x="1" y="1" width="18" height="20" />
            <rect x="5" y="4" width="10" height="14" />
            <path d="M7 8h6M7 11h6M7 14h6" />
          </svg>
        </Slot>
        <Slot className="ml-[29px] w-[30px]">
          <svg width="20" height="20" viewBox="0 0 20 20" fill="none" stroke="#666">
            <path d="M1 1h18v18H1zM1 12h10V1M7 1v7" />
          </svg>
        </Slot>
        <div className="ml-[25px] h-[2px] w-[9px] bg-[#555]" />
        <div className="ml-[9px] flex h-[3px] w-[148px] items-center justify-center bg-[#333]">
          <div className="h-[16px] w-[8px] bg-[#666]" />
        </div>
        <svg className="ml-[7px]" width="13" height="13" viewBox="0 0 13 13" stroke="#555" strokeWidth="1.4">
          <path d="M6.5 0v13M0 6.5h13" />
        </svg>
        <span className="ml-[19px] mr-[11px] w-[48px] text-right">100%</span>
      </div>
    </div>
  );
}

export default function App() {
  return (
    <div className="h-[1080px] w-[1920px] overflow-hidden border-2 border-[#1f6b49] bg-white p-[9px] font-['Noto_Sans_CJK_SC','Liberation_Sans',sans-serif]">
      <div className="flex h-full flex-col">
        <div className="bg-[#1e6b47]">
          <TitleBar />
          <TabRow />
        </div>
        <Ribbon />
        <FormulaBar />
        <div className="flex h-[626px]">
          <Sheet />
          <VScroll />
        </div>
        <SheetTabs />
        <StatusBar />
      </div>
    </div>
  );
}
